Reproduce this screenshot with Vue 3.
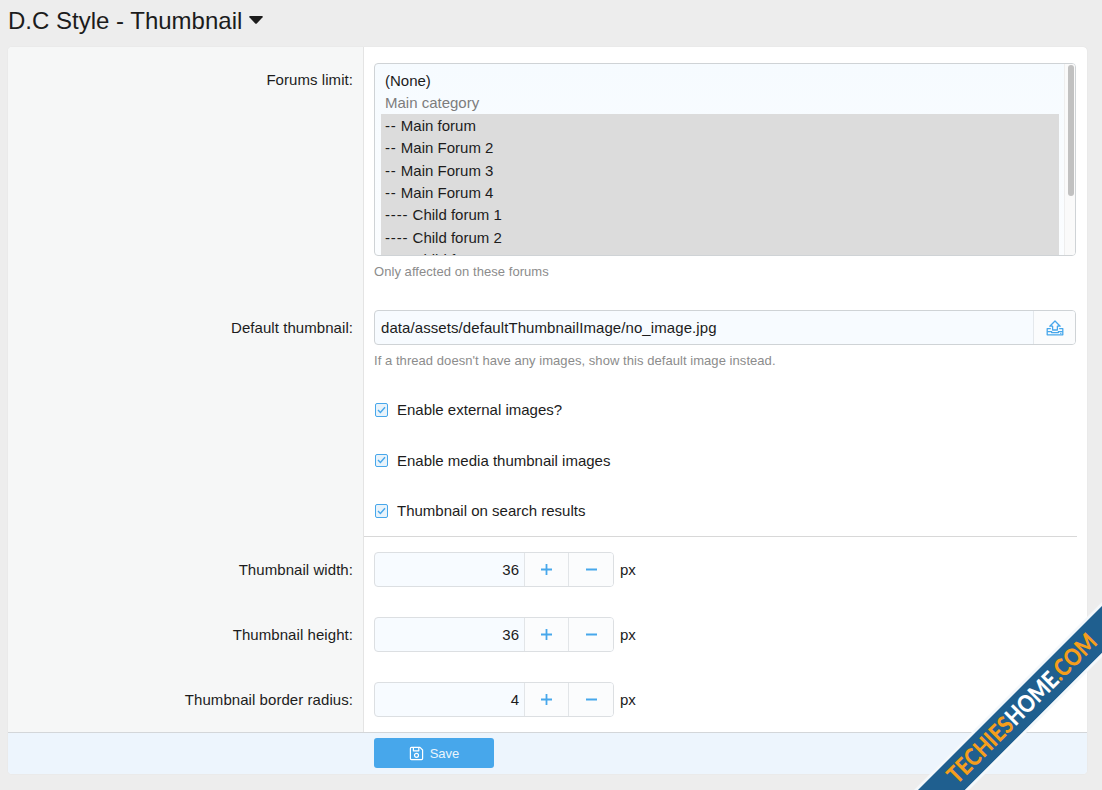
<script setup>
const options = [
  { text: '(None)' },
  { text: 'Main category', muted: true },
  { dash: '--', text: ' Main forum', selected: true },
  { dash: '--', text: ' Main Forum 2', selected: true },
  { dash: '--', text: ' Main Forum 3', selected: true },
  { dash: '--', text: ' Main Forum 4', selected: true },
  { dash: '----', text: ' Child forum 1', selected: true },
  { dash: '----', text: ' Child forum 2', selected: true },
  { dash: '----', text: ' Child forum 3', selected: true }
]
const checks = ['Enable external images?', 'Enable media thumbnail images', 'Thumbnail on search results']
const numbers = [
  { label: 'Thumbnail width:', value: 36 },
  { label: 'Thumbnail height:', value: 36 },
  { label: 'Thumbnail border radius:', value: 4 }
]
</script>

<template>
  <div class="page">
    <header class="head">
      <h1 class="title">D.C Style - Thumbnail</h1>
      <svg class="caret" width="14" height="8" viewBox="0 0 14 8" fill="#1c1c1c">
        <path d="M1 0 H13 Q14.4 0 13.6 1.2 L7.8 7.4 Q7 8.2 6.2 7.4 L0.4 1.2 Q-0.4 0 1 0 Z" />
      </svg>
    </header>

    <main class="card">
      <div class="row row-first">
        <div class="label">Forums limit:</div>
        <div class="field">
          <div class="listbox">
            <div class="options">
              <div
                v-for="o in options"
                :key="o.text"
                class="option"
                :class="{ muted: o.muted, selected: o.selected }"
              ><span v-if="o.dash" class="dash">{{ o.dash }}</span>{{ o.text }}</div>
            </div>
            <div class="track"><div class="thumb"></div></div>
          </div>
          <p class="hint">Only affected on these forums</p>
        </div>
      </div>

      <div class="row row-file">
        <div class="label">Default thumbnail:</div>
        <div class="field">
          <div class="file">
            <span class="file-path">data/assets/defaultThumbnailImage/no_image.jpg</span>
            <span class="file-btn">
              <svg width="18" height="16" viewBox="0 0 18 16" fill="none" stroke="#47a7eb" stroke-width="1.3" stroke-linejoin="round">
                <path d="M9 1 L14.2 6.2 H11.4 V10 H6.6 V6.2 H3.8 Z" />
                <path d="M4.8 8.6 H1.2 V14.8 H16.8 V8.6 H13.2" />
                <path d="M1.2 11.6 H5.6 V12.6 H12.4 V11.6 H16.8" />
                <path d="M14.2 13.3 H15.4" />
              </svg>
            </span>
          </div>
          <p class="hint">If a thread doesn't have any images, show this default image instead.</p>
        </div>
      </div>

      <div v-for="c in checks" :key="c" class="row row-check">
        <div class="label"></div>
        <div class="field">
          <label class="check">
            <span class="box">
              <svg width="9" height="8" viewBox="0 0 9 8" fill="none" stroke="#47a7eb" stroke-width="1.4">
                <path d="M1 4 L3.4 6.4 L8 1.2" />
              </svg>
            </span>
            {{ c }}
          </label>
        </div>
      </div>

      <div class="row row-sep">
        <div class="label"></div>
        <div class="field"><div class="sep"></div></div>
      </div>

      <div v-for="n in numbers" :key="n.label" class="row row-number">
        <div class="label">{{ n.label }}</div>
        <div class="field number-field">
          <div class="number">
            <span class="number-value">{{ n.value }}</span>
            <span class="step step-plus">
              <svg width="13" height="13" viewBox="0 0 13 13" stroke="#47a7eb" stroke-width="1.8"><path d="M6.5 1 V12 M1 6.5 H12" /></svg>
            </span>
            <span class="step">
              <svg width="13" height="13" viewBox="0 0 13 13" stroke="#47a7eb" stroke-width="1.8"><path d="M1 6.5 H12" /></svg>
            </span>
          </div>
          <span class="unit">px</span>
        </div>
      </div>

      <footer class="foot">
        <button class="save" type="button">
          <svg width="15" height="15" viewBox="0 0 15 15" fill="none" stroke="#ffffff" stroke-width="1.2" stroke-linejoin="round">
            <path d="M1.4 2.4 A1 1 0 0 1 2.4 1.4 H11 L13.6 4 V12.6 A1 1 0 0 1 12.6 13.6 H2.4 A1 1 0 0 1 1.4 12.6 Z" />
            <path d="M4.4 1.6 V4.8 H9.8 V1.6" />
            <circle cx="7.5" cy="9.3" r="2" />
          </svg>
          <span>Save</span>
        </button>
      </footer>
    </main>

    <svg class="ribbon" width="190" height="190" viewBox="0 0 190 190">
      <polygon points="190,2 190,6 6,190 2,190" fill="#f4f8fb" />
      <polygon points="190,6 190,53 53,190 6,190" fill="#1f5f8f" />
      <polygon points="190,53 190,57 57,190 53,190" fill="#f4f8fb" />
      <text class="ribbon-text" transform="translate(45 185) rotate(-45)" x="0" y="0" textLength="200" lengthAdjust="spacingAndGlyphs">
        <tspan fill="#f59e1c">TECHIES</tspan><tspan fill="#ffffff">HOME</tspan><tspan fill="#f59e1c">.COM</tspan>
      </text>
    </svg>
  </div>
</template>

<style>
html, body {
  margin: 0;
  background: #ededed;
  overflow: hidden;
}
</style>

<style scoped>
.page {
  position: relative;
  height: 790px;
  box-sizing: border-box;
  padding: 0 15px 16px 8px;
  background: #ededed;
  color: #1c1c1c;
  font-family: "Liberation Sans", Arial, sans-serif;
  font-size: 15px;
  line-height: 22.4px;
  overflow: hidden;
}
.head {
  display: flex;
  align-items: center;
  gap: 7px;
  height: 47px;
  padding-bottom: 7px;
  box-sizing: border-box;
}
.title {
  margin: 0;
  font-size: 24px;
  font-weight: 400;
  line-height: 29px;
}
.caret {
  flex: none;
}
.card {
  border-radius: 4px;
  overflow: hidden;
  background: #ffffff;
  box-shadow: 0 0 1px rgba(0, 0, 0, 0.12);
}
.row {
  display: flex;
}
.label {
  box-sizing: border-box;
  width: 356px;
  flex: none;
  padding: 0 10px 0 10px;
  text-align: right;
  letter-spacing: 0.06px;
  background: #f6f7f7;
  border-right: 1px solid #e4e4e4;
}
.field {
  flex: 1;
  min-width: 0;
  padding: 0 11px 0 10px;
}
.row-first .label { padding-top: 22px; }
.row-first .field { padding-top: 16px; padding-bottom: 15px; }
.row-file .label { padding-top: 22px; }
.row-file .field { padding-top: 15px; padding-bottom: 16px; }
.row-check .field { padding-top: 14.4px; padding-bottom: 13.6px; }
.row-sep .field { padding: 0; }
.row-number .label { padding-top: 22px; }
.row-number .field { padding-top: 15px; padding-bottom: 15px; }

.listbox {
  display: flex;
  height: 193px;
  box-sizing: border-box;
  border: 1px solid #cfd3d6;
  border-radius: 4px;
  background: linear-gradient(180deg, #f6fbff 0%, #fbfdff 100%);
  overflow: hidden;
}
.options {
  flex: 1;
  min-width: 0;
  padding: 6px 5px 0 6px;
}
.option {
  padding: 0 4px;
  height: 22.4px;
  line-height: 22.4px;
  white-space: nowrap;
}
.option.muted { color: #7d7d7d; }
.option.selected {
  background: #dcdcdc;
  box-shadow: 0 -1px 0 #dcdcdc;
}
.dash { letter-spacing: 0.85px; }
.track {
  flex: none;
  width: 11px;
  padding: 1px 1px 0 3px;
  box-sizing: border-box;
  background: #fafafa;
  border-left: 1px solid #eeeeee;
}
.thumb {
  height: 131px;
  border-radius: 3px;
  background: #c1c1c1;
}
.hint {
  margin: 7px 0 0;
  font-size: 13px;
  line-height: 17px;
  letter-spacing: 0.055px;
  color: #8c8c8c;
}
.file {
  display: flex;
  height: 35px;
  box-sizing: border-box;
  border: 1px solid #cfd3d6;
  border-radius: 4px;
  background: #f7fbff;
  overflow: hidden;
}
.file-path {
  flex: 1;
  padding: 0 6px;
  line-height: 33px;
  letter-spacing: 0.08px;
}
.file-btn {
  flex: none;
  width: 41px;
  display: flex;
  align-items: center;
  justify-content: center;
  border-left: 1px solid #e4e8ec;
  background: #fbfcfd;
}
.check {
  display: flex;
  align-items: center;
  gap: 9px;
  height: 22.4px;
}
.box {
  box-sizing: border-box;
  width: 13.5px;
  height: 13.5px;
  margin: -1px 0 0 0.5px;
  display: flex;
  align-items: center;
  justify-content: center;
  border: 1.5px solid #47a7eb;
  border-radius: 2px;
  background: #e8f3fb;
}
.sep {
  height: 1px;
  margin-right: 10px;
  background: #d8d8d8;
}
.number-field {
  display: flex;
  align-items: center;
  gap: 6px;
}
.number {
  display: flex;
  width: 240px;
  height: 35px;
  box-sizing: border-box;
  border: 1px solid #dcdfe2;
  border-radius: 4px;
  background: #f7fbff;
  overflow: hidden;
}
.number-value {
  flex: 1;
  padding-right: 5px;
  text-align: right;
  line-height: 33px;
}
.step {
  flex: none;
  width: 44px;
  display: flex;
  align-items: center;
  justify-content: center;
  border-left: 1px solid #e2e5e8;
  background: #fbfcfd;
}
.step-plus { width: 43px; }
.unit { line-height: 35px; }
.foot {
  box-sizing: border-box;
  height: 42px;
  padding: 5px 0 0 366px;
  border-top: 1px solid #d3d6d9;
  background: #edf5fd;
}
.save {
  display: flex;
  align-items: center;
  justify-content: center;
  gap: 6px;
  width: 120px;
  height: 30px;
  padding: 0;
  border: 0;
  border-radius: 3px;
  background: #47a7eb;
  color: #eaf5fd;
  font-family: inherit;
  font-size: 13px;
}
.ribbon {
  position: absolute;
  right: 0;
  bottom: 0;
  pointer-events: none;
}
.ribbon-text {
  font-family: Lato, "Liberation Sans", sans-serif;
  font-weight: 900;
  font-size: 24px;
}
</style>
